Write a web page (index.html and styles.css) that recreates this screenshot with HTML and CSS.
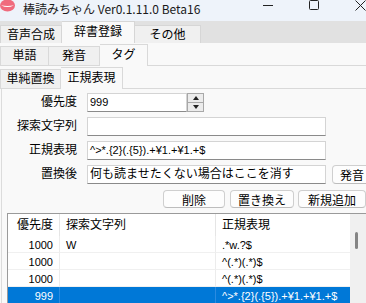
FILE: index.html
```html
<!DOCTYPE html>
<html lang="ja">
<head>
<meta charset="utf-8">
<title>棒読みちゃん</title>
<link rel="stylesheet" href="styles.css">
</head>
<body>
<div class="titlebar">
  <svg class="logo" width="16" height="13" viewBox="0 0 16 13"><ellipse cx="7.5" cy="5.5" rx="7.5" ry="6" fill="#f06b7d"/><path d="M1 5.2 Q7.5 9 14 5.2 Q7.5 6.6 1 5.2Z" fill="#fff"/></svg>
  <span class="title">棒読みちゃん Ver0.1.11.0 Beta16</span>
  <div class="controls">
    <svg width="10" height="11" viewBox="0 0 10 11"><path d="M0 5.5H10" stroke="#222" stroke-width="1"/></svg>
    <svg width="10" height="11" viewBox="0 0 10 11"><rect x="0.5" y="0.5" width="9" height="9" rx="1" fill="none" stroke="#222" stroke-width="1"/></svg>
    <svg width="11" height="11" viewBox="0 0 11 11"><path d="M0.5 0.5L10.5 10.5M10.5 0.5L0.5 10.5" stroke="#222" stroke-width="1"/></svg>
  </div>
</div>
<div class="tabs1">
  <div class="t1 w1">音声合成</div>
  <div class="t1 w2 sel">辞書登録</div>
  <div class="t1 w3">その他</div>
</div>
<div class="tabs2">
  <div class="t2 a1">単語</div>
  <div class="t2 a2">発音</div>
  <div class="t2 a3 sel">タグ</div>
</div>
<div class="tabs3">
  <div class="t2 b1">単純置換</div>
  <div class="t2 b2 sel">正規表現</div>
</div>
<div class="content">
  <div class="form">
    <div class="lbl">優先度</div>
    <div class="fr">
      <div class="field num"><span class="v">999</span></div>
      <div class="spin"><span class="up"></span><span class="dn"></span></div>
    </div>
    <div class="lbl">探索文字列</div>
    <div class="fr"><div class="field wide"></div></div>
    <div class="lbl">正規表現</div>
    <div class="fr"><div class="field wide"><span class="v">^&gt;*.{2}(.{5}).+¥1.+¥1.+$</span></div></div>
    <div class="lbl">置換後</div>
    <div class="fr">
      <div class="field wide">何も読ませたくない場合はここを消す</div>
      <div class="btn hatsuon">発音</div>
    </div>
  </div>
  <div class="btns">
    <div class="btn c1">削除</div>
    <div class="btn c2">置き換え</div>
    <div class="btn c3">新規追加</div>
  </div>
  <div class="list">
    <div class="table">
      <div class="row head">
        <div class="cell r">優先度</div>
        <div class="cell">探索文字列</div>
        <div class="cell">正規表現</div>
      </div>
      <div class="row">
        <div class="cell r v">1000</div>
        <div class="cell v">W</div>
        <div class="cell v">.*w.?$</div>
      </div>
      <div class="row">
        <div class="cell r v">1000</div>
        <div class="cell v"></div>
        <div class="cell v">^(.*)(.*)$</div>
      </div>
      <div class="row">
        <div class="cell r v">1000</div>
        <div class="cell v"></div>
        <div class="cell v">^(.*)(.*)$</div>
      </div>
      <div class="row selrow">
        <div class="cell r v">999</div>
        <div class="cell v"></div>
        <div class="cell v">^&gt;*.{2}(.{5}).+¥1.+¥1.+$</div>
      </div>
    </div>
    <div class="scroll"><div class="thumb"></div></div>
  </div>
</div>
</body>
</html>
```
FILE: styles.css
```css
* { box-sizing: border-box; }
html, body { margin: 0; padding: 0; }
body {
  width: 366px;
  height: 303px;
  overflow: hidden;
  background: #f9f9f9;
  color: #000;
  font-family: "Liberation Sans", "Noto Sans CJK JP", sans-serif;
  font-size: 12px;
}
.v { font-family: "Liberation Sans", sans-serif; font-size: 11px; }

.titlebar {
  height: 21px;
  background: #eef3fa;
  display: flex;
  align-items: flex-start;
}
.logo { display: block; flex: none; }
.title {
  margin-left: 7px;
  font-family: "Noto Sans CJK JP", sans-serif;
  font-size: 12px;
  line-height: 17px;
  color: #1a1a1a;
  white-space: nowrap;
}
.controls {
  margin-left: auto;
  display: flex;
  gap: 36px;
}
.controls svg { display: block; }

.tabs1 {
  height: 22px;
  background: #e1e1e1;
  display: flex;
  align-items: flex-end;
}
.t1 {
  height: 18px;
  background: #f0f0f0;
  border: 1px solid #d6d6d6;
  border-bottom: none;
  display: flex;
  align-items: center;
  justify-content: center;
  line-height: 14px;
  white-space: nowrap;
}
.t1 + .t1 { border-left: none; }
.t1.sel {
  height: 22px;
  background: #f9f9f9;
  padding-bottom: 1px;
}
.w1 { width: 62px; }
.w2 { width: 73px; }
.w3 { width: 66px; }

.tabs2, .tabs3 {
  height: 23px;
  display: flex;
  align-items: flex-end;
  border-bottom: 1px solid #d9d9d9;
}
.t2 {
  height: 19px;
  background: #f0f0f0;
  border: 1px solid #d9d9d9;
  border-bottom: none;
  display: flex;
  align-items: center;
  justify-content: center;
  line-height: 14px;
  white-space: nowrap;
}
.t2 + .t2 { border-left: none; }
.t2.sel {
  height: 22px;
  margin-bottom: -1px;
  background: #f9f9f9;
  padding-bottom: 1px;
}
.a1 { width: 49px; }
.a2 { width: 51px; }
.a3 { width: 48px; }
.b1 { width: 61px; }
.b2 { width: 62px; }

.content {
  margin-left: 1px;
  border-left: 1px solid #dcdcdc;
  height: 214px;
}
.form {
  display: grid;
  grid-template-columns: 75px 1fr;
  column-gap: 10px;
  row-gap: 5px;
  padding-top: 4px;
}
.lbl {
  height: 19px;
  line-height: 19px;
  text-align: right;
  white-space: nowrap;
}
.fr { display: flex; height: 19px; }
.field {
  height: 19px;
  background: #fff;
  border: 1px solid #d4d4d4;
  border-bottom-color: #8a8a8a;
  padding-left: 2px;
  line-height: 17px;
  white-space: nowrap;
  overflow: hidden;
}
.field.num { width: 100px; }
.field.wide { width: 239px; }
.spin {
  width: 17px;
  height: 19px;
  border: 1px solid #a8a8a8;
  background: #ececec;
  display: flex;
  flex-direction: column;
}
.spin span {
  flex: 1;
  display: flex;
  align-items: center;
  justify-content: center;
}
.spin .up { border-bottom: 1px solid #a8a8a8; }
.spin .up::before {
  content: "";
  border-left: 3.5px solid transparent;
  border-right: 3.5px solid transparent;
  border-bottom: 4px solid #222;
}
.spin .dn::before {
  content: "";
  border-left: 3.5px solid transparent;
  border-right: 3.5px solid transparent;
  border-top: 4px solid #222;
}
.btn {
  height: 19px;
  background: #fdfdfd;
  border: 1px solid #cfcfcf;
  border-bottom-color: #bdbdbd;
  border-radius: 4px;
  display: flex;
  align-items: center;
  justify-content: center;
  white-space: nowrap;
}
.hatsuon { width: 40px; margin-left: 6px; }
.btns {
  display: flex;
  margin-top: 6px;
  margin-left: 161px;
  height: 18px;
}
.btns .btn { height: 18px; }
.c1 { width: 64px; }
.c2 { width: 66px; margin-left: 5px; }
.c3 { width: 70px; margin-left: 4px; }

.list {
  margin-top: 5px;
  margin-left: 5px;
  border-top: 1px solid #9a9a9a;
  border-left: 1px solid #9a9a9a;
  background: #fff;
  display: flex;
  height: 95px;
}
.table { width: 342px; }
.row {
  display: grid;
  grid-template-columns: 52px 156px 1fr;
  height: 17px;
}
.row.head { height: 22px; }
.cell {
  border-right: 1px solid #ececec;
  border-bottom: 1px solid #f0f0f0;
  padding-left: 6px;
  line-height: 18px;
  white-space: nowrap;
  overflow: hidden;
}
.cell.r { text-align: right; padding-left: 0; padding-right: 6px; }
.head .cell {
  border-bottom: none;
  border-right-color: #e5e5e5;
  line-height: 22px;
}
.head .cell:last-child { border-right: none; }
.row .cell:last-child { border-right: none; }
.selrow { background: #0078d7; color: #fff; }
.selrow .cell { border-bottom: none; border-right-color: #2b8be0; }
.scroll {
  width: 16px;
  background: #f0f0f0;
  padding-left: 5px;
  padding-top: 18px;
}
.thumb {
  width: 3px;
  height: 17px;
  background: #858585;
  border-radius: 2px;
}
```
